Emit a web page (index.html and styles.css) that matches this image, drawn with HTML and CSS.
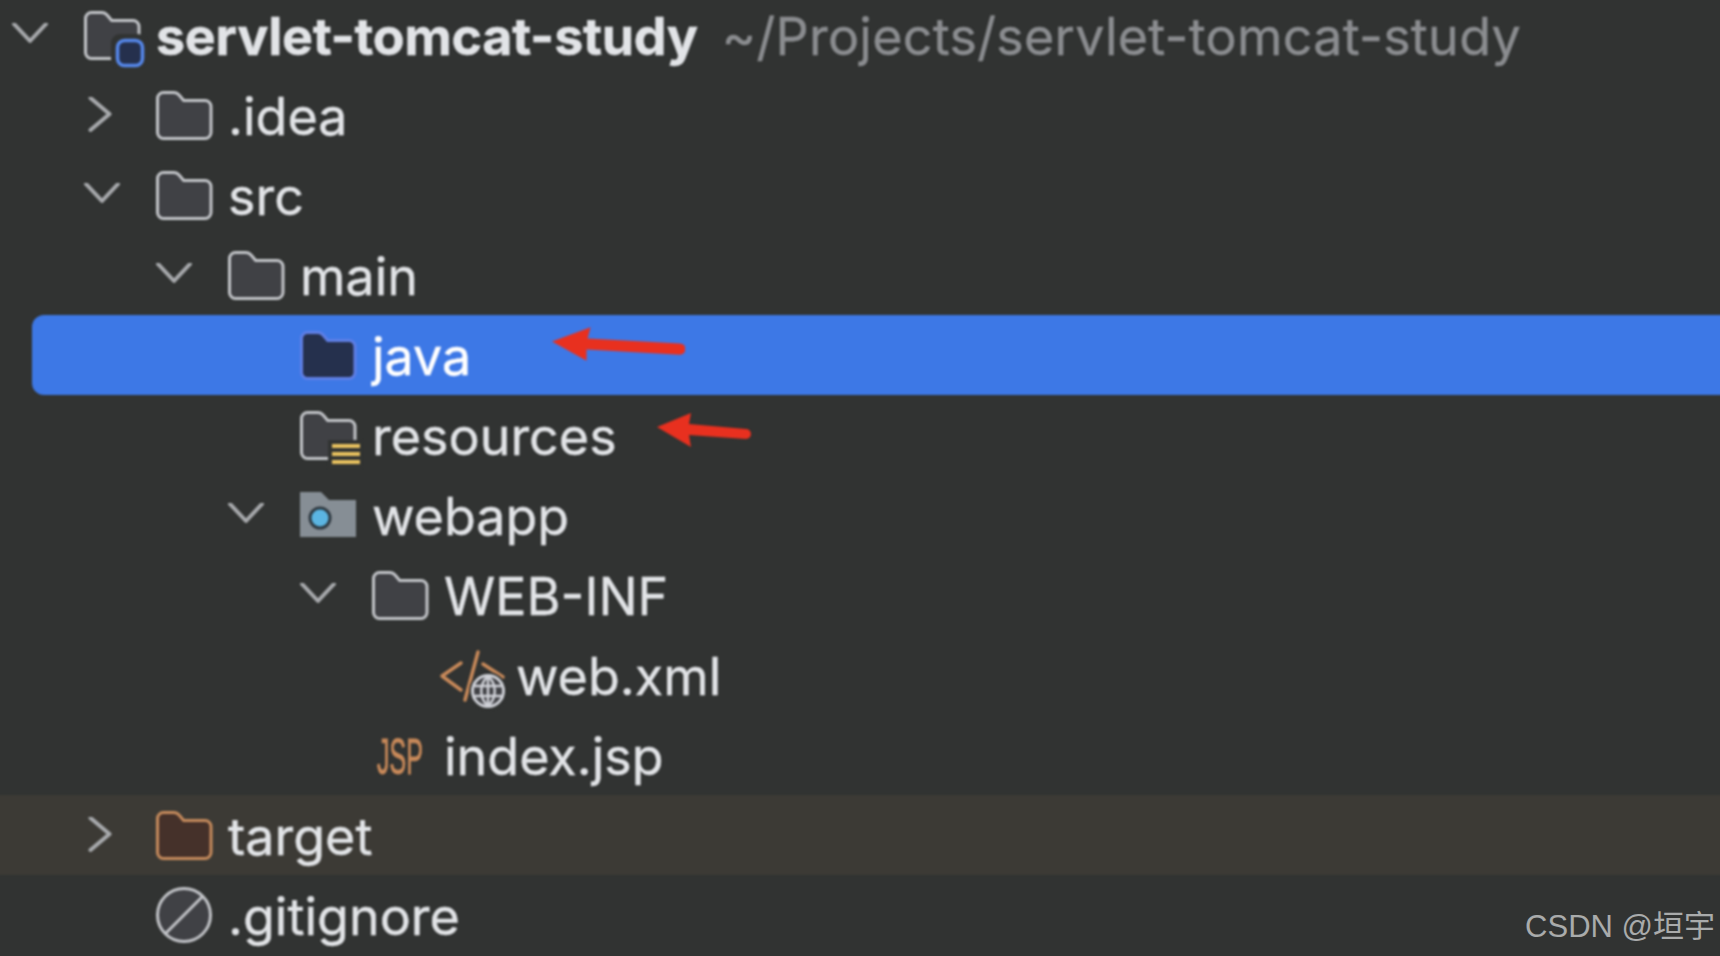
FILE: index.html
```html
<!DOCTYPE html>
<html lang="en">
<head>
<meta charset="utf-8">
<title>Project tree</title>
<link rel="stylesheet" href="styles.css">
</head>
<body>
<svg class="defs" width="0" height="0" aria-hidden="true">
  <defs>
    <symbol id="folder" viewBox="0 0 56 48" overflow="visible">
      <path class="fo" d="M1.5 7.5a6 6 0 0 1 6-6h10c2.6 0 4.200.8 5.800 2.800l4.400 5.200h21.300a6 6 0 0 1 6 6v26a6 6 0 0 1-6 6h-41.500a6 6 0 0 1-6-6z"/>
    </symbol>
    <symbol id="open" viewBox="0 0 36 24"><path class="ch" d="M2 1 18 18 34 1"/></symbol>
    <symbol id="closed" viewBox="0 0 36 36"><path class="ch" d="M6.500 1 25.500 17 6.500 33"/></symbol>
  </defs>
</svg>
<main class="tree">
  <div class="row">
    <span class="slot"><svg class="chev"><use href="#open"/></svg></span>
    <svg class="icon" viewBox="0 0 56 48">
      <path class="fo" d="M1.500 7.500a6 6 0 0 1 6-6h10c2.600 0 4.200.8 5.800 2.800l4.400 5.200h21.300a6 6 0 0 1 6 6v26a6 6 0 0 1-6 6h-41.500a6 6 0 0 1-6-6z"/>
      <rect class="cut" x="27" y="23" width="36" height="34" rx="9"/>
      <rect class="badge" x="33.500" y="29.500" width="25" height="25" rx="7"/>
    </svg>
    <span class="name bold">servlet-tomcat-study</span><span class="path">~/Projects/servlet-tomcat-study</span>
  </div>
  <div class="row l1">
    <span class="slot"><svg class="chev side"><use href="#closed"/></svg></span>
    <svg class="icon"><use href="#folder"/></svg>
    <span class="name">.idea</span>
  </div>
  <div class="row l1">
    <span class="slot"><svg class="chev"><use href="#open"/></svg></span>
    <svg class="icon"><use href="#folder"/></svg>
    <span class="name">src</span>
  </div>
  <div class="row l2">
    <span class="slot"><svg class="chev"><use href="#open"/></svg></span>
    <svg class="icon"><use href="#folder"/></svg>
    <span class="name">main</span>
  </div>
  <div class="row l3 selected">
    <span class="slot"></span>
    <svg class="icon java"><use href="#folder"/></svg>
    <span class="name">java</span>
    <svg class="arrow arrow-java" viewBox="0 0 132 36"><path d="M1 15 39 1 36 12 127 17a5 5 0 0 1 0 11L35 23 35 34z"/></svg>
  </div>
  <div class="row l3">
    <span class="slot"></span>
    <svg class="icon" viewBox="0 0 56 48">
      <path class="fo" d="M1.500 7.500a6 6 0 0 1 6-6h10c2.600 0 4.200.8 5.800 2.800l4.400 5.200h21.300a6 6 0 0 1 6 6v26a6 6 0 0 1-6 6h-41.500a6 6 0 0 1-6-6z"/>
      <rect class="cut" x="28" y="29" width="34" height="28"/>
      <path class="bars" d="M32 35h28M32 43h28M32 51h28"/>
    </svg>
    <span class="name">resources</span>
    <svg class="arrow arrow-res" viewBox="0 0 96 36"><path d="M1 15 35 1 33 12 90 17a5 5 0 0 1 0 10L33 23 35 35z"/></svg>
  </div>
  <div class="row l3">
    <span class="slot"><svg class="chev"><use href="#open"/></svg></span>
    <svg class="icon" viewBox="0 0 56 48">
      <path class="web" d="M0 1h21l8 8h27v37H0z"/>
      <circle class="dot" cx="20" cy="27" r="10"/>
    </svg>
    <span class="name">webapp</span>
  </div>
  <div class="row l4">
    <span class="slot"><svg class="chev"><use href="#open"/></svg></span>
    <svg class="icon"><use href="#folder"/></svg>
    <span class="name">WEB-INF</span>
  </div>
  <div class="row l5">
    <span class="slot"></span>
    <svg class="icon" viewBox="0 0 56 48">
      <path class="xml" d="M17 12-2 25 17 39M34 1 21 49M39 13 59 26"/>
      <circle class="globe-cut" cx="44" cy="40" r="19"/>
      <circle class="globe" cx="44" cy="40" r="15.500"/>
      <path class="globe-line" d="M29 35h30M29 45h30M44 25v30M44 25c-9 8-9 22 0 30M44 25c9 8 9 22 0 30"/>
    </svg>
    <span class="name">web.xml</span>
  </div>
  <div class="row l4">
    <span class="slot"></span>
    <svg class="icon" viewBox="0 0 56 48">
      <text class="jsp" transform="translate(5 43) scale(.5 1)">JSP</text>
    </svg>
    <span class="name">index.jsp</span>
  </div>
  <div class="row l1 excluded">
    <span class="slot"><svg class="chev side"><use href="#closed"/></svg></span>
    <svg class="icon target"><use href="#folder"/></svg>
    <span class="name">target</span>
  </div>
  <div class="row l1">
    <span class="slot"></span>
    <svg class="icon tall" viewBox="0 0 56 56">
      <circle class="fo" cx="28" cy="28" r="26.500"/>
      <path class="fo-line" d="M9 47 47 9"/>
    </svg>
    <span class="name">.gitignore</span>
  </div>
</main>
<div class="mark">CSDN @垣宇</div>
</body>
</html>
```
FILE: styles.css
```css
html, body {
  margin: 0;
  height: 100%;
  overflow: hidden;
  background: #313332;
}
body {
  position: relative;
  font-family: Inter, "Noto Sans", sans-serif;
}
.defs {
  position: absolute;
}
.tree {
  margin: -5px -10px 0;
  display: flex;
  flex-direction: column;
  filter: blur(0.8px);
}
.row {
  position: relative;
  display: flex;
  align-items: center;
  height: 80px;
  flex: none;
  padding-left: 10px;
  font-size: 52px;
  color: #e2e4e7;
  white-space: nowrap;
}
.l1 { padding-left: 82px; }
.l2 { padding-left: 154px; }
.l3 { padding-left: 226px; }
.l4 { padding-left: 298px; }
.l5 { padding-left: 370px; }
.slot {
  flex: none;
  width: 84px;
  height: 36px;
  display: flex;
  align-items: center;
}
.chev {
  width: 36px;
  height: 24px;
  margin-left: 12px;
  overflow: visible;
}
.chev.side {
  width: 36px;
  height: 36px;
}
.ch {
  fill: none;
  stroke: #a8aaad;
  stroke-width: 4px;
  stroke-linecap: round;
  stroke-linejoin: round;
}
.icon {
  flex: none;
  width: 56px;
  height: 48px;
  margin-right: 16px;
  overflow: visible;
}
.icon.tall { height: 56px; }
.name, .path {
  padding-top: 2px;
  -webkit-text-stroke: 0.4px currentColor;
}
.fo {
  fill: var(--folder-fill, #404145);
  stroke: var(--folder-line, #c3c5c9);
  stroke-width: 3px;
}
.fo-line {
  fill: none;
  stroke: #c3c5c9;
  stroke-width: 3px;
}
.java {
  --folder-fill: #25304d;
  --folder-line: #5f7fe6;
}
.target {
  --folder-fill: #45312a;
  --folder-line: #c58a5c;
}
.cut { fill: #313332; }
.badge {
  fill: #25304d;
  stroke: #5587ea;
  stroke-width: 3.500px;
}
.bars {
  fill: none;
  stroke: #e8c25f;
  stroke-width: 4px;
}
.web { fill: #868e95; }
.dot {
  fill: #5bb5e2;
  stroke: #2f3a42;
  stroke-width: 3px;
}
.xml {
  fill: none;
  stroke: #c98a5a;
  stroke-width: 3.500px;
  stroke-linecap: round;
  stroke-linejoin: round;
}
.globe-cut { fill: #313332; }
.globe {
  fill: #404145;
  stroke: #ced0d6;
  stroke-width: 3px;
}
.globe-line {
  fill: none;
  stroke: #ced0d6;
  stroke-width: 2.500px;
}
.jsp {
  font-family: "Liberation Sans", sans-serif;
  font-size: 50px;
  fill: #c98a5a;
  stroke: #c98a5a;
  stroke-width: 1px;
}
.bold {
  font-weight: 700;
  letter-spacing: -0.3px;
}
.path {
  margin-left: 24px;
  color: #8b8d90;
  letter-spacing: 0.26px;
}
.selected {
  margin-left: 42px;
  padding-left: 184px;
  background: #3d78e6;
  border-radius: 12px 0 0 12px;
  color: #ffffff;
}
.excluded { background: #3c3a35; }
.arrow {
  position: absolute;
  fill: #e8301f;
}
.arrow-java {
  left: 519px;
  top: 11px;
  width: 134px;
  height: 37px;
}
.arrow-res {
  left: 666px;
  top: 17px;
  width: 96px;
  height: 36px;
}
.mark {
  position: absolute;
  right: 5px;
  bottom: 11px;
  font-family: "Liberation Sans", "Noto Sans CJK SC", sans-serif;
  font-size: 31px;
  line-height: 36px;
  color: #a9abab;
}
```
